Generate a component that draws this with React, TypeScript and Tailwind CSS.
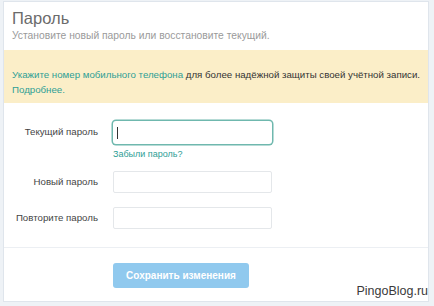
export default function App() {
  return (
    <div className="w-[434px] h-[306px] bg-[#eef2f6] pl-[3px] pr-[5px] pt-[1px] pb-[4px] relative overflow-hidden" style={{ fontFamily: '"Liberation Sans", Arial, sans-serif' }}>
      <div className="h-full bg-white border border-[#dfe5ec] flex flex-col">
        <div className="px-[8px] pt-[6px] h-[48px]">
          <div className="text-[16.5px] leading-[20px] text-[#6b6b6b]">Пароль</div>
          <div className="text-[10.3px] leading-[13px] text-[#9a9a9a] mt-[1px]">Установите новый пароль или восстановите текущий.</div>
        </div>
        <div className="bg-[#fbeec8] h-[53px] px-[8px] pt-[17px] text-[9.7px] leading-[15px] text-[#333] whitespace-nowrap">
          <div><span className="text-[#2e9e95]">Укажите номер мобильного телефона</span> для более надёжной защиты своей учётной записи.</div>
          <div className="text-[#2e9e95]">Подробнее.</div>
        </div>
        <div className="flex flex-col pt-[18px] border-b border-[#eceff3] pb-[18px]">
          <div className="flex items-center">
            <div className="w-[94px] text-right text-[9.7px] text-[#444]">Текущий пароль</div>
            <div className="ml-[15px] w-[159px] h-[23px] rounded-[3px] flex items-center pl-[4px] shadow-[0_0_0_1.5px_#6fb8ae]">
              <div className="w-px h-[12px] bg-[#333]" />
            </div>
          </div>
          <div className="ml-[109px] mt-[4px] text-[9px] leading-[12px] text-[#2e9e95]">Забыли пароль?</div>
          <div className="flex items-center mt-[11px]">
            <div className="w-[94px] text-right text-[9.7px] text-[#444]">Новый пароль</div>
            <div className="ml-[15px] w-[159px] h-[22px] border border-[#e4e7ea] rounded-[2px]" />
          </div>
          <div className="flex items-center mt-[14px]">
            <div className="w-[94px] text-right text-[9.7px] text-[#444]">Повторите пароль</div>
            <div className="ml-[15px] w-[159px] h-[22px] border border-[#e4e7ea] rounded-[2px]" />
          </div>
        </div>
        <div className="pl-[109px] pt-[15px]">
          <div className="w-[136px] h-[25px] bg-[#90c9ee] rounded-[3px] flex items-center justify-center text-white text-[10px] font-bold">Сохранить изменения</div>
        </div>
      </div>
      <div className="absolute right-[6px] top-[282px] text-[12.5px] text-[#3a3a3a]">PingoBlog.ru</div>
    </div>
  );
}
